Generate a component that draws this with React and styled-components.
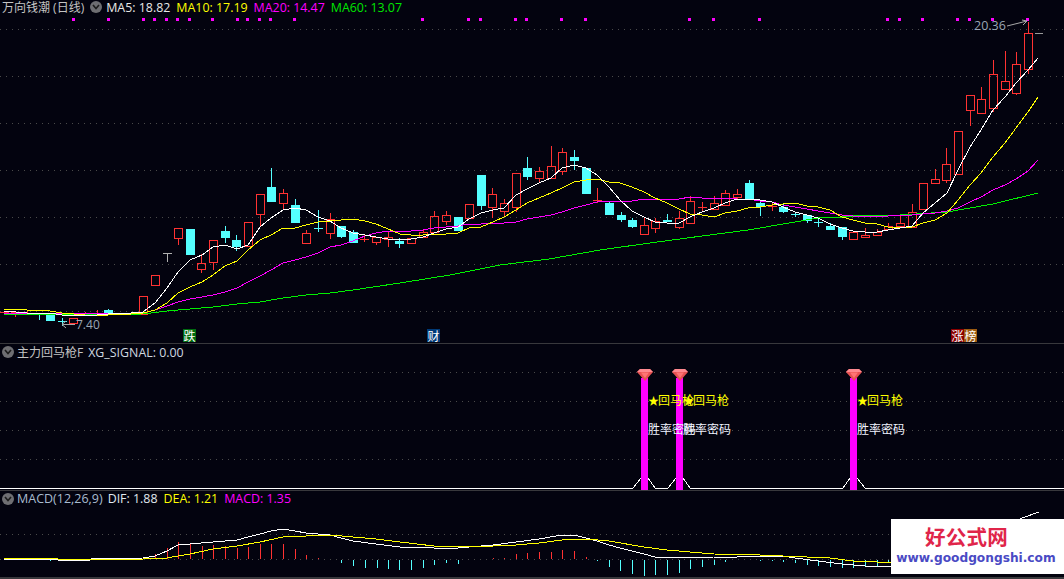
import styled, { createGlobalStyle } from "styled-components";

const BG = "#03030f";
const UP = "#ff3232";
const DOWN = "#54ffff";
const FONT = `"Open Sans", "Noto Sans CJK SC", sans-serif`;
const CJK = `"Noto Sans CJK SC", sans-serif`;

const GlobalStyle = createGlobalStyle`
	html, body {
		margin: 0;
		padding: 0;
		background: ${BG};
		overflow: hidden;
	}
`;

const Page = styled.div`
	position: relative;
	width: 1064px;
	height: 579px;
	background: ${BG};
	font-family: ${FONT};
	overflow: hidden;
`;

const Pane = styled.section`
	display: flex;
	flex-direction: column;
	height: ${(p) => p.$height}px;
	box-sizing: border-box;
	border-top: ${(p) => (p.$divided ? "1px solid #38383c" : "none")};
`;

const Legend = styled.header`
	display: flex;
	align-items: center;
	flex: none;
	height: ${(p) => p.$height}px;
	padding-left: ${(p) => p.$pad || 0}px;
	font-size: 12.4px;
	white-space: nowrap;
`;

const Title = styled.span`
	color: ${(p) => p.$color || "#c4c4c4"};
	font-size: ${(p) => p.$size || 12}px;
	margin-right: ${(p) => p.$gap || 0}px;
`;

const Reading = styled.span`
	color: ${(p) => p.$color};
	margin-right: ${(p) => p.$gap || 6}px;
`;

const Caret = styled.span`
	display: flex;
	align-items: center;
	justify-content: center;
	flex: none;
	width: 12px;
	height: 12px;
	border-radius: 50%;
	background: #6e6e72;
	margin-right: ${(p) => p.$gap || 3}px;
`;

const Canvas = styled.div`
	position: relative;
	flex: 1;
	min-height: 0;
`;

const Plot = styled.svg`
	display: block;
	width: 1064px;
	height: 100%;
	shape-rendering: crispEdges;
`;

const Badge = styled.span`
	position: absolute;
	left: ${(p) => p.$x}px;
	top: ${(p) => p.$y}px;
	width: 13px;
	height: 13px;
	line-height: 13px;
	text-align: center;
	font-family: ${CJK};
	font-size: 12px;
	color: #fff;
	background: ${(p) => p.$bg};
`;

const PriceTag = styled.span`
	position: absolute;
	left: ${(p) => p.$x}px;
	top: ${(p) => p.$y}px;
	font-size: ${(p) => p.$size || 12.5}px;
	line-height: 14px;
	color: #9aa6b4;
`;

const Signal = styled.span`
	position: absolute;
	left: ${(p) => p.$x}px;
	top: ${(p) => p.$y}px;
	font-family: ${CJK};
	font-size: 12px;
	line-height: 14px;
	white-space: nowrap;
	color: ${(p) => p.$color};
`;

const Star = styled.span`
	display: inline-block;
	width: 10px;
	font-size: 11px;
`;

const Watermark = styled.div`
	position: absolute;
	left: 891px;
	top: 519px;
	width: 173px;
	height: 55px;
	background: #fff;
	display: flex;
	flex-direction: column;
	align-items: center;
	justify-content: flex-start;
`;

const WatermarkName = styled.div`
	font-family: ${CJK};
	font-weight: 700;
	font-size: 20.5px;
	line-height: 24px;
	margin-top: 5px;
	margin-right: 22px;
	letter-spacing: 0.2px;
	color: #e0254a;
`;

const WatermarkUrl = styled.div`
	font-family: "DejaVu Sans", sans-serif;
	font-weight: 700;
	font-size: 12.2px;
	line-height: 14px;
	margin-top: 3px;
	margin-right: 3px;
	color: #4a4ac4;
`;

const Footer = styled.div`
	height: 2px;
	background: #38383c;
`;

// [top, bottom, high, low, up?]  one row per bar, 11.64px apart
const candles = [
	[312, 312, 312, 312, 1], [312, 312, 312, 317, 1], [313, 313, 311, 315, 1], [313, 314, 313, 320, 0],
	[315, 321, 315, 321, 0], [321, 321, 318, 326, 0], [318, 323, 318, 323, 1], [314, 314, 312, 316, 1],
	[313, 313, 310, 315, 1], [310, 313, 309, 314, 0], [313, 313, 313, 313, 1], [314, 314, 313, 315, 1],
	[296, 314, 296, 314, 1], [275, 285, 275, 285, 1], [253, 253, 253, 262, 2], [228, 238, 228, 245, 1],
	[229, 255, 229, 255, 0], [263, 269, 254, 273, 1], [240, 262, 240, 270, 1], [231, 238, 226, 243, 0],
	[240, 247, 235, 251, 0], [222, 246, 222, 246, 1], [194, 214, 194, 226, 1], [187, 202, 168, 202, 0],
	[193, 203, 189, 209, 1], [205, 223, 199, 223, 0], [233, 243, 230, 243, 1], [228, 228, 210, 232, 0],
	[219, 233, 213, 239, 1], [226, 237, 226, 238, 0], [232, 243, 230, 243, 0], [239, 239, 235, 242, 1],
	[237, 242, 237, 245, 1], [237, 239, 231, 247, 1], [241, 244, 238, 248, 0], [238, 243, 238, 243, 1],
	[232, 237, 230, 237, 1], [216, 232, 211, 232, 1], [215, 221, 211, 225, 1], [217, 231, 217, 231, 0],
	[204, 218, 204, 218, 1], [175, 206, 175, 210, 0], [194, 207, 188, 218, 1], [203, 211, 199, 216, 1],
	[173, 207, 173, 212, 1], [168, 177, 157, 180, 0], [171, 178, 167, 182, 1], [166, 178, 146, 178, 1],
	[152, 171, 148, 175, 1], [157, 161, 150, 170, 0], [168, 194, 168, 194, 0], [200, 200, 188, 203, 1],
	[203, 215, 202, 215, 0], [215, 220, 212, 222, 0], [220, 227, 218, 228, 0], [225, 234, 217, 235, 1],
	[221, 228, 218, 233, 1], [220, 222, 214, 222, 0], [218, 227, 211, 229, 1], [201, 223, 196, 224, 1],
	[207, 207, 202, 211, 1], [203, 209, 196, 209, 1], [193, 205, 190, 205, 1], [194, 197, 189, 200, 1],
	[183, 199, 180, 199, 0], [203, 207, 200, 216, 0], [206, 206, 202, 211, 1], [207, 212, 203, 213, 0],
	[214, 214, 212, 217, 0], [215, 221, 215, 223, 0], [222, 222, 218, 227, 0], [226, 230, 223, 230, 0],
	[227, 237, 227, 240, 0], [232, 239, 232, 239, 1], [235, 237, 228, 237, 1], [232, 235, 229, 235, 1],
	[226, 229, 223, 230, 1], [223, 226, 215, 226, 1], [212, 227, 204, 227, 1], [183, 209, 183, 209, 1],
	[179, 183, 169, 184, 1], [164, 180, 148, 183, 1], [131, 174, 131, 174, 1], [95, 110, 95, 126, 1],
	[99, 113, 87, 113, 1], [74, 108, 60, 112, 1], [81, 89, 51, 90, 1], [64, 93, 52, 95, 1],
	[33, 69, 22, 74, 1],
];

const ma5 = "4,311 27,313 50,313 62,315 97,315 120,313 131,313 143,312 155,303 167,288 178,272 190,260 202,255 213,247 225,245 237,249 248,245 260,227 271,218 283,210 295,208 306,210 318,217 330,221 341,228 353,233 365,235 376,237 388,239 400,240 411,239 423,237 434,233 446,229 458,227 469,219 481,213 493,210 504,208 516,195 527,189 539,183 551,178 562,168 574,165 586,168 597,175 609,187 620,200 632,211 644,217 655,222 667,223 679,223 690,217 702,212 714,208 725,203 737,199 748,199 760,200 772,202 783,207 795,212 807,215 818,218 830,224 842,228 853,231 865,232 877,232 888,230 900,228 912,226 923,213 935,203 947,193 958,170 970,147 981,130 993,110 1005,97 1016,83 1028,70 1038,58";
const ma10 = "4,309 27,310 50,311 62,313 85,315 108,315 131,314 143,313 155,310 167,303 178,293 190,287 202,282 213,275 225,266 237,261 248,250 260,240 271,235 283,228 295,228 306,225 318,222 330,221 341,220 353,219 365,221 376,224 388,229 400,234 411,235 423,235 434,234 446,234 458,233 469,228 481,227 493,222 504,217 516,210 527,203 539,198 551,193 562,188 574,182 586,180 597,179 609,182 620,183 632,187 644,192 655,198 667,203 679,209 690,214 702,215 714,217 725,213 737,211 748,208 760,207 772,205 783,204 795,203 807,206 818,207 830,210 842,217 853,220 865,223 877,224 888,227 900,227 912,227 923,223 935,220 947,213 958,200 970,185 981,173 993,157 1005,143 1016,128 1028,112 1038,97";
const ma20 = "4,313 27,313 62,313 131,313 143,313 155,310 167,306 178,302 190,299 202,297 213,295 225,292 237,288 248,282 260,276 271,270 283,263 295,260 306,257 318,253 330,247 341,245 353,241 365,236 376,233 388,231 400,231 411,231 423,230 434,228 446,227 458,226 469,224 481,224 493,223 504,223 516,222 527,219 539,217 551,215 562,212 574,208 586,205 597,202 609,201 620,201 632,201 644,199 655,199 667,199 679,199 690,197 702,198 714,198 725,198 737,199 748,199 760,201 772,202 783,205 795,207 807,209 818,211 830,213 842,215 853,216 877,216 888,216 900,215 912,215 923,214 935,213 947,211 958,208 970,202 981,197 993,190 1005,185 1016,179 1028,171 1038,160";
const ma60 = "4,315 143,314 167,311 190,309 213,307 237,304 260,302 283,298 306,295 330,293 353,290 400,283 450,275 500,265 549,259 600,250 650,243 702,236 748,230 795,222 818,218 842,217 853,216 900,215 947,212 993,204 1038,193";

const dots = [73, 108, 143, 154, 166, 177, 189, 212, 237, 247, 259, 270, 294, 422, 468, 480, 515, 526, 561, 585, 689, 713, 759, 887, 899, 922, 957, 969, 992, 1027];

const signalBars = [641, 676, 850];

const macdBars = [
	[27, 560], [50, 561], [62, 561], [74, 560], [143, 558], [155, 554], [167, 548], [178, 542], [190, 543], [202, 546],
	[213, 545], [225, 546], [237, 548], [248, 547], [260, 544], [271, 544], [283, 544], [295, 549], [306, 555], [318, 558],
	[341, 563], [353, 566], [365, 568], [377, 568], [388, 569], [399, 570], [411, 570], [423, 568], [434, 565], [446, 563],
	[458, 564], [469, 560], [493, 558], [504, 558], [516, 554], [527, 553], [539, 552], [551, 552], [562, 550], [574, 551],
	[586, 557], [597, 561], [609, 567], [620, 571], [632, 574], [644, 576], [655, 575], [667, 575], [679, 573], [690, 569],
	[702, 567], [714, 565], [725, 562], [737, 560], [760, 561], [772, 561], [783, 562], [795, 563], [807, 565], [818, 566],
	[830, 567], [842, 568], [853, 568], [865, 567], [877, 567], [888, 563],
];

const dif = "4,559 57,559 58,560 90,560 91,559 143,558 155,556 167,551 178,545 190,544 213,542 237,540 248,537 260,534 271,531 283,529 295,531 306,533 330,535 341,538 353,541 376,544 400,547 434,548 458,548 481,546 493,545 516,542 539,539 562,535 574,535 586,538 597,541 609,545 620,548 644,554 655,557 679,558 714,557 737,557 760,556 783,556 795,558 818,561 842,564 865,566 888,567 900,566 1010,525 1022,518 1039,512";
const dea = "4,558 57,558 58,559 143,559 167,558 178,556 190,554 213,549 237,546 260,542 283,537 306,536 330,535 353,537 376,539 400,542 434,546 458,546 493,546 516,545 539,543 562,540 586,539 609,541 644,547 667,550 690,552 714,554 760,555 783,556 807,557 830,558 853,561 877,562 892,563";

const Candle = ({ index, row }) => {
	const [top, bottom, high, low, kind] = row;
	const x = Math.round(3.6 + 11.64 * index);
	const color = kind === 0 ? DOWN : kind === 1 ? UP : "#b0b0b0";
	return (
		<g stroke={color}>
			{high < top && <line x1={x + 0.5} x2={x + 0.5} y1={high} y2={top} />}
			{low > bottom && <line x1={x + 0.5} x2={x + 0.5} y1={bottom} y2={low} />}
			{top === bottom ? (
				<line x1={x - 4} x2={x + 5} y1={top + 0.5} y2={top + 0.5} />
			) : kind === 0 ? (
				<rect x={x - 4} y={top} width={9} height={bottom - top} fill={color} stroke="none" />
			) : (
				<rect x={x - 3.5} y={top + 0.5} width={8} height={bottom - top} fill="none" />
			)}
		</g>
	);
};

const Grid = ({ rows }) =>
	rows.map((y) => (
		<line key={y} x1="0" x2="1064" y1={y + 0.5} y2={y + 0.5} stroke="#4a4a4a" strokeDasharray="1 5" />
	));

const Chevron = () => (
	<svg width="8" height="6" viewBox="0 0 8 6">
		<path d="M1 1 L4 4.5 L7 1" fill="none" stroke="#1c1c1c" strokeWidth="1.6" />
	</svg>
);

const Gem = ({ x }) => (
	<g shapeRendering="auto">
		<polygon points={`${x - 4},372 ${x - 1},369 ${x + 9},369 ${x + 12},372 ${x + 4},381`} fill="#e85252" />
		<polygon points={`${x - 4},372 ${x - 1},369 ${x + 9},369 ${x + 12},372`} fill="#ff8a90" />
		<polygon points={`${x},372.5 ${x + 8},372.5 ${x + 4},378`} fill="#ff7474" />
	</g>
);

const PricePane = () => (
	<Pane $height={343}>
		<Legend $height={14} $pad={2}>
			<Title $gap={6}>万向钱潮 (日线)</Title>
			<Caret $gap={4}>
				<Chevron />
			</Caret>
			<Reading $color="#e8e8e8">MA5: 18.82</Reading>
			<Reading $color="#ffff00">MA10: 17.19</Reading>
			<Reading $color="#ff00ff">MA20: 14.47</Reading>
			<Reading $color="#00e600">MA60: 13.07</Reading>
		</Legend>
		<Canvas>
			<Plot viewBox="0 14 1064 329">
				<Grid rows={[29, 76, 123, 170, 217, 264, 311]} />
				{dots.map((x) => (
					<rect key={x} x={x - 1} y={18} width={3} height={3} fill="#ff00ff" />
				))}
				{candles.map((row, i) => (
					<Candle key={i} index={i} row={row} />
				))}
				<g fill="none">
					<polyline points={ma60} stroke="#00f000" />
					<polyline points={ma20} stroke="#ff00ff" />
					<polyline points={ma10} stroke="#ffff00" />
					<polyline points={ma5} stroke="#ffffff" />
				</g>
				<line x1="1035" x2="1043" y1="33.5" y2="33.5" stroke="#9a9a9a" />
				<g fill="none" stroke="#a8a8a8" shapeRendering="auto">
					<path d="M1007 26 L1027 21 M1022 20 L1027 21 L1023 25" />
					<path d="M75 324.5 H62 M66 321 L62 324.5 L66 328" />
					<path d="M1053 3.5 L1058 8.5 L1053 13.5 L1048 8.5 Z" stroke="#5c5c5c" />
				</g>
			</Plot>
			<PriceTag $x={974} $y={5}>20.36</PriceTag>
			<PriceTag $x={76} $y={304} $size={12}>7.40</PriceTag>
			<Badge $x={183} $y={315} $bg="#006b10">跌</Badge>
			<Badge $x={427} $y={315} $bg="#003a78">财</Badge>
			<Badge $x={951} $y={315} $bg="#8b0000">涨</Badge>
			<Badge $x={964} $y={315} $bg="#9c5a10">榜</Badge>
		</Canvas>
	</Pane>
);

const SignalPane = () => (
	<Pane $height={147} $divided>
		<Legend $height={16} $pad={2}>
			<Caret>
				<Chevron />
			</Caret>
			<Title $gap={5}>主力回马枪F</Title>
			<Reading $color="#d0d8e0">XG_SIGNAL: 0.00</Reading>
		</Legend>
		<Canvas>
			<Plot viewBox="0 360 1064 130">
				<Grid rows={[372, 401, 430, 459]} />
				<polyline
					points="0,488 633,488 641,478 648,478 655,488 668,488 676,478 683,478 690,488 843,488 850,478 857,478 865,488 1064,488"
					fill="none"
					stroke="#ffffff"
				/>
				{signalBars.map((x) => (
					<rect key={x} x={x} y={378} width={7} height={112} fill="#ff00ff" />
				))}
				{signalBars.map((x) => (
					<Gem key={x} x={x} />
				))}
			</Plot>
			{signalBars.map((x) => (
				<Signal key={x} $x={x + 7} $y={33} $color="#ffff00">
					<Star>★</Star>回马枪
				</Signal>
			))}
			{signalBars.map((x) => (
				<Signal key={x} $x={x + 7} $y={62} $color="#f0f4ff">胜率密码</Signal>
			))}
		</Canvas>
	</Pane>
);

const MacdPane = () => (
	<Pane $height={87} $divided>
		<Legend $height={15} $pad={2}>
			<Caret>
				<Chevron />
			</Caret>
			<Title $color="#a8bcd0" $size={12.5} $gap={5}>MACD(12,26,9)</Title>
			<Reading $color="#e0e8f0">DIF: 1.88</Reading>
			<Reading $color="#ffff00">DEA: 1.21</Reading>
			<Reading $color="#ff00ff">MACD: 1.35</Reading>
		</Legend>
		<Canvas>
			<Plot viewBox="0 506 1064 71">
				<Grid rows={[534, 559]} />
				{macdBars.map(([x, end]) => (
					<line
						key={x}
						x1={x + 0.5}
						x2={x + 0.5}
						y1={end < 559 ? end : 560}
						y2={end < 559 ? 559 : end}
						stroke={end < 559 ? UP : DOWN}
					/>
				))}
				<polyline points={dif} fill="none" stroke="#ffffff" />
				<polyline points={dea} fill="none" stroke="#ffff00" />
			</Plot>
		</Canvas>
	</Pane>
);

const App = () => (
	<Page>
		<GlobalStyle />
		<PricePane />
		<SignalPane />
		<MacdPane />
		<Footer />
		<Watermark>
			<WatermarkName>好公式网</WatermarkName>
			<WatermarkUrl>www.goodgongshi.com</WatermarkUrl>
		</Watermark>
	</Page>
);

export default App;
